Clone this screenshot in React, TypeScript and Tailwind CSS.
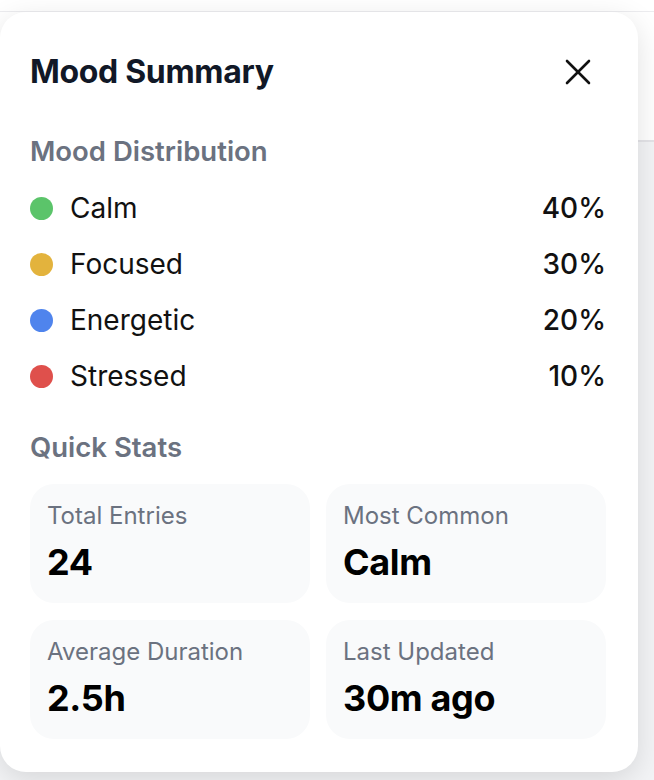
import React from 'react';

const moods = [
  { name: 'Calm', pct: '40%', color: 'bg-[#5bc46a]' },
  { name: 'Focused', pct: '30%', color: 'bg-[#e3b33d]' },
  { name: 'Energetic', pct: '20%', color: 'bg-[#4f84ed]' },
  { name: 'Stressed', pct: '10%', color: 'bg-[#df504c]' },
];

const stats = [
  { label: 'Total Entries', value: '24' },
  { label: 'Most Common', value: 'Calm' },
  { label: 'Average Duration', value: '2.5h' },
  { label: 'Last Updated', value: '30m ago' },
];

function CloseIcon() {
  return (
    <svg width="26" height="26" viewBox="0 0 26 26" fill="none" stroke="#111111" strokeWidth="2.6" strokeLinecap="round">
      <line x1="2" y1="2" x2="24" y2="24" />
      <line x1="24" y1="2" x2="2" y2="24" />
    </svg>
  );
}

export default function App() {
  return (
    <div className="relative w-[654px] h-[780px] overflow-hidden bg-white font-['Inter','Noto_Sans',sans-serif]">
      {/* page behind the panel */}
      <div className="h-[12px] border-b border-[#ececef] bg-white" />
      <div className="h-[128px] bg-white" />
      <div className="h-[640px] border-t-2 border-[#e4e4e8] bg-[#f3f4f6]" />

      <div className="absolute left-0 top-[12px] w-[638px] h-[760px] rounded-[26px] bg-white shadow-[0_8px_30px_rgba(0,0,0,0.12)] pl-[30px] pr-8 pt-8 pb-8 flex flex-col">
        <div className="h-[56px] flex items-center justify-between">
          <h2 className="text-[32px] font-bold tracking-[-0.01em] text-[#111827] leading-none">Mood Summary</h2>
          <button className="w-[40px] h-[40px] flex items-center justify-center mr-[8px]">
            <CloseIcon />
          </button>
        </div>

        <h3 className="mt-[34px] h-[36px] flex items-center text-[27.5px] font-semibold text-[#6b7280]">Mood Distribution</h3>
        <div className="mt-[20px] flex flex-col gap-[20px]">
          {moods.map(m => (
            <div key={m.name} className="h-[36px] flex items-center justify-between">
              <div className="flex items-center">
                <span className={`w-[23px] h-[23px] rounded-full ${m.color}`} />
                <span className="ml-[17px] text-[28px] text-[#111111]">{m.name}</span>
              </div>
              <span className="text-[28px] font-medium text-[#111111]">{m.pct}</span>
            </div>
          ))}
        </div>

        <h3 className="mt-[36px] h-[36px] flex items-center text-[27.5px] font-semibold text-[#6b7280]">Quick Stats</h3>
        <div className="mt-[18px] grid grid-cols-2 gap-x-[16px] gap-y-[17px]">
          {stats.map(s => (
            <div key={s.label} className="h-[119px] rounded-[24px] bg-[#f9fafb] px-[17px] pt-[18px]">
              <div className="h-[28px] flex items-center text-[24px] text-[#6b7280]">{s.label}</div>
              <div className="mt-[12px] h-[40px] flex items-center text-[36px] font-bold tracking-[-0.01em] text-black">{s.value}</div>
            </div>
          ))}
        </div>
      </div>
    </div>
  );
}
